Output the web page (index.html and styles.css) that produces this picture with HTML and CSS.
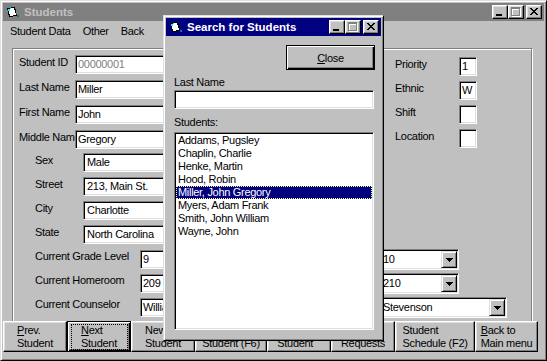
FILE: index.html
```html
<!DOCTYPE html>
<html lang="en">
<head>
<meta charset="utf-8">
<title>Students</title>
<link rel="stylesheet" href="styles.css">
</head>
<body>
<div class="win main">
  <div class="titlebar inactive">
    <svg class="appicon" width="16" height="16" viewBox="0 0 16 16" shape-rendering="crispEdges">
      <polygon points="2,4 10,3 12,12 4,13" fill="#000"/>
      <polygon points="3,5 9,4 11,11 5,12" fill="#fff"/>
      <polygon points="3,5 6,4 4,8" fill="#00ffff"/>
      <rect x="12" y="11" width="2" height="2" fill="#008080"/>
    </svg>
    <span class="title">Students</span>
    <div class="tbtns">
      <span class="tbtn"><svg width="14" height="12" viewBox="0 0 14 12" shape-rendering="crispEdges"><rect x="3" y="8" width="6" height="2"/></svg></span>
      <span class="tbtn"><svg width="14" height="12" viewBox="0 0 14 12" shape-rendering="crispEdges"><g fill="#fff"><rect x="3" y="2" width="9" height="2"/><rect x="3" y="4" width="1" height="7"/><rect x="11" y="4" width="1" height="7"/><rect x="3" y="10" width="9" height="1"/></g><g fill="#808080"><rect x="2" y="1" width="9" height="2"/><rect x="2" y="3" width="1" height="7"/><rect x="10" y="3" width="1" height="7"/><rect x="2" y="9" width="9" height="1"/></g></svg></span>
      <span class="tbtn x"><svg width="14" height="12" viewBox="0 0 14 12" shape-rendering="crispEdges"><path transform="translate(3 2)" d="M0 0h2v1H0z M6 0h2v1H6z M1 1h2v1H1z M5 1h2v1H5z M2 2h4v1H2z M3 3h2v1H3z M2 4h4v1H2z M1 5h2v1H1z M5 5h2v1H5z M0 6h2v1H0z M6 6h2v1H6z"/></svg></span>
    </div>
  </div>
  <div class="menubar">
    <span class="mi">Student Data</span><span class="mi">Other</span><span class="mi">Back</span>
  </div>
  <div class="group">
    <div class="leftcol">
      <div class="fields main-fields">
        <div class="row"><span class="lbl lw56">Student ID</span><span class="tb w150 dis">00000001</span></div>
        <div class="row"><span class="lbl lw56">Last Name</span><span class="tb w150">Miller</span></div>
        <div class="row"><span class="lbl lw56">First Name</span><span class="tb w150">John</span></div>
        <div class="row"><span class="lbl lw56">Middle Name</span><span class="tb w150">Gregory</span></div>
      </div>
      <div class="fields addr-fields">
        <div class="row ind"><span class="lbl lw48">Sex</span><span class="tb w150 p3">Male</span></div>
        <div class="row ind"><span class="lbl lw48">Street</span><span class="tb w150 p3">213, Main St.</span></div>
        <div class="row ind"><span class="lbl lw48">City</span><span class="tb w150 p3">Charlotte</span></div>
        <div class="row ind"><span class="lbl lw48">State</span><span class="tb w150 p3">North Carolina</span></div>
      </div>
    </div>
    <div class="rightcol">
      <div class="row"><span class="lbl lw64">Priority</span><span class="tb sq">1</span></div>
      <div class="row"><span class="lbl lw64">Ethnic</span><span class="tb sq">W</span></div>
      <div class="row"><span class="lbl lw64">Shift</span><span class="tb sq"></span></div>
      <div class="row"><span class="lbl lw64">Location</span><span class="tb sq"></span></div>
    </div>
    <div class="bottomrows">
      <div class="row brow"><span class="lbl lw105">Current Grade Level</span><span class="tb w100">9</span><span class="combo cw80"><span class="cval">10</span><span class="ddbtn"><svg width="7" height="4" viewBox="0 0 7 4" shape-rendering="crispEdges"><path d="M0 0h7v1H0z M1 1h5v1H1z M2 2h3v1H2z M3 3h1v1H3z"/></svg></span></span></div>
      <div class="row brow"><span class="lbl lw105">Current Homeroom</span><span class="tb w100">209</span><span class="combo cw80"><span class="cval">210</span><span class="ddbtn"><svg width="7" height="4" viewBox="0 0 7 4" shape-rendering="crispEdges"><path d="M0 0h7v1H0z M1 1h5v1H1z M2 2h3v1H2z M3 3h1v1H3z"/></svg></span></span></div>
      <div class="row brow"><span class="lbl lw105">Current Counselor</span><span class="tb w100">William Stevenson</span><span class="combo cw128"><span class="cval">Stevenson</span><span class="ddbtn"><svg width="7" height="4" viewBox="0 0 7 4" shape-rendering="crispEdges"><path d="M0 0h7v1H0z M1 1h5v1H1z M2 2h3v1H2z M3 3h1v1H3z"/></svg></span></span></div>
    </div>
  </div>
  <div class="cmdbar">
    <div class="cmd w64"><span class="cap"><u>P</u>rev.<br>Student</span></div>
    <div class="cmd w64 def focus"><span class="cap"><u>N</u>ext<br>Student</span></div>
    <div class="cmd w64"><span class="cap">New<br>Student</span></div>
    <div class="cmd w72"><span class="cap">Find<br>Student (F6)</span></div>
    <div class="cmd w64"><span class="cap">Withdraw<br>Student</span></div>
    <div class="cmd w64"><span class="cap">Course<br>Requests</span></div>
    <div class="cmd w80"><span class="cap">Student<br>Schedule (F2)</span></div>
    <div class="cmd w63"><span class="cap"><u>B</u>ack to<br>Main menu</span></div>
  </div>

  <div class="win dialog">
    <div class="titlebar">
      <svg class="appicon" width="16" height="16" viewBox="0 0 16 16" shape-rendering="crispEdges">
        <polygon points="2,4 10,3 12,12 4,13" fill="#000"/>
        <polygon points="3,5 9,4 11,11 5,12" fill="#fff"/>
        <polygon points="3,5 6,4 4,8" fill="#00ffff"/>
        <rect x="12" y="11" width="2" height="2" fill="#008080"/>
      </svg>
      <span class="title">Search for Students</span>
      <div class="tbtns">
        <span class="tbtn"><svg width="14" height="12" viewBox="0 0 14 12" shape-rendering="crispEdges"><rect x="3" y="8" width="6" height="2"/></svg></span>
        <span class="tbtn"><svg width="14" height="12" viewBox="0 0 14 12" shape-rendering="crispEdges"><g fill="#fff"><rect x="3" y="2" width="9" height="2"/><rect x="3" y="4" width="1" height="7"/><rect x="11" y="4" width="1" height="7"/><rect x="3" y="10" width="9" height="1"/></g><g fill="#808080"><rect x="2" y="1" width="9" height="2"/><rect x="2" y="3" width="1" height="7"/><rect x="10" y="3" width="1" height="7"/><rect x="2" y="9" width="9" height="1"/></g></svg></span>
        <span class="tbtn x"><svg width="14" height="12" viewBox="0 0 14 12" shape-rendering="crispEdges"><path transform="translate(3 2)" d="M0 0h2v1H0z M6 0h2v1H6z M1 1h2v1H1z M5 1h2v1H5z M2 2h4v1H2z M3 3h2v1H3z M2 4h4v1H2z M1 5h2v1H1z M5 5h2v1H5z M0 6h2v1H0z M6 6h2v1H6z"/></svg></span>
      </div>
    </div>
    <div class="dbody">
      <div class="closebtn"><span><u>C</u>lose</span></div>
      <div class="dlbl dlbl1">Last Name</div>
      <div class="tb dinput"></div>
      <div class="dlbl dlbl2">Students:</div>
      <div class="listbox">
        <div class="li">Addams, Pugsley</div>
        <div class="li">Chaplin, Charlie</div>
        <div class="li">Henke, Martin</div>
        <div class="li">Hood, Robin</div>
        <div class="li sel">Miller, John Gregory</div>
        <div class="li">Myers, Adam Frank</div>
        <div class="li">Smith, John William</div>
        <div class="li">Wayne, John</div>
      </div>
    </div>
  </div>
</div>
</body>
</html>
```

FILE: styles.css
```css
* { box-sizing: border-box; margin: 0; padding: 0; }
html, body { background: #c0c0c0; }
body {
  width: 547px; height: 361px; overflow: hidden;
  font-family: "Liberation Sans", Arial, sans-serif;
  font-size: 11px; letter-spacing: -0.3px; color: #000;
}
.win {
  background: #c0c0c0;
  border: 1px solid; border-color: #dfdfdf #000 #000 #dfdfdf;
  box-shadow: inset 1px 1px #fff, inset -1px -1px #808080;
  padding: 2px;
  display: flex; flex-direction: column;
}
.main { position: relative; width: 547px; height: 361px; }

.titlebar {
  flex: none; height: 18px; display: flex; align-items: center;
  padding: 0 2px; background: #000080; color: #fff;
  font-weight: bold; font-size: 11.5px; letter-spacing: 0; white-space: nowrap;
}
.titlebar.inactive { background: #808080; color: #c0c0c0; }
.appicon { display: block; flex: none; }
.title { margin-left: 3px; }
.tbtns { margin-left: auto; display: flex; }
.tbtn {
  width: 16px; height: 14px; background: #c0c0c0;
  border: 1px solid; border-color: #fff #000 #000 #fff;
  box-shadow: inset -1px -1px #808080, inset 1px 1px #dfdfdf;
}
.tbtn svg { display: block; }
.tbtn.x { margin-left: 2px; }

.menubar { flex: none; height: 19px; display: flex; align-items: center; padding-left: 1px; white-space: nowrap; }
.mi { padding: 0 6px; }

.group {
  flex: none; width: 520px; height: 275px; margin: 8px 0 0 9px;
  border: 1px solid #808080;
  box-shadow: inset 1px 1px #fff, 1px 1px #fff;
  padding: 6px 0 0 6px;
  display: grid; grid-template-columns: 376px 1fr; align-content: start;
}
.leftcol { grid-column: 1; grid-row: 1; }
.rightcol { grid-column: 2; grid-row: 1; display: flex; flex-direction: column; gap: 5px; margin-top: 2px; }
.bottomrows { grid-column: 1 / -1; grid-row: 2; display: flex; flex-direction: column; gap: 3px; margin-top: 5px; }

.fields { display: flex; flex-direction: column; }
.main-fields { gap: 6px; }
.addr-fields { gap: 5px; margin-top: 4px; }
.row { display: flex; align-items: flex-start; height: 19px; }
.ind { padding-left: 16px; }
.lbl { flex: none; line-height: 13px; margin-top: 1px; white-space: nowrap; }
.lw56 { width: 56px; }
.lw48 { width: 48px; }
.lw64 { width: 64px; }
.lw105 { width: 105px; }

.tb {
  flex: none; height: 19px; background: #fff;
  border: 1px solid; border-color: #808080 #fff #fff #808080;
  box-shadow: inset 1px 1px #000, inset -1px -1px #dfdfdf;
  padding: 0 2px; line-height: 17px; white-space: nowrap; overflow: hidden;
}
.tb.dis { color: #808080; }
.tb.p3 { padding-left: 3px; }
.w150 { width: 150px; }
.w100 { width: 100px; }
.sq { width: 18px; }

.brow { height: 21px; padding-left: 16px; }
.brow .tb { margin-top: 1px; }
.brow .lbl { margin-top: 1px; }
.combo {
  flex: none; height: 21px; margin-left: 139px;
  display: flex; align-items: center; background: #fff;
  border: 1px solid; border-color: #808080 #fff #fff #808080;
  box-shadow: inset 1px 1px #000, inset -1px -1px #dfdfdf;
  padding: 1px;
}
.cw80 { width: 80px; }
.cw128 { width: 128px; }
.cval { flex: 1; padding-left: 2px; line-height: 17px; white-space: nowrap; overflow: hidden; }
.ddbtn {
  flex: none; width: 16px; height: 17px;
  display: flex; align-items: center; justify-content: center;
  background: #c0c0c0;
  border: 1px solid; border-color: #dfdfdf #000 #000 #dfdfdf;
  box-shadow: inset 1px 1px #fff, inset -1px -1px #808080;
}
.ddbtn svg { display: block; margin-top: 1px; }

.cmdbar { flex: none; display: flex; height: 31px; margin-top: -2px; }
.cmd {
  position: relative; flex: none; height: 31px;
  display: flex; align-items: center; justify-content: center;
  background: #c0c0c0;
  border: 1px solid; border-color: #fff #000 #000 #fff;
  box-shadow: inset -1px -1px #808080, inset 1px 1px #dfdfdf;
}
.cmd.def {
  border-color: #000;
  box-shadow: inset 1px 1px #fff, inset -1px -1px #000, inset -2px -2px #808080;
}
.cmd.focus::after {
  content: ""; position: absolute; left: 3px; top: 2px; right: 2px; bottom: 1px;
  border: 1px dotted #000;
}
.cap { line-height: 13px; white-space: nowrap; text-align: left; }
.w64 { width: 64px; }
.w72 { width: 72px; }
.w80 { width: 80px; }
.w63 { width: 63px; }

.dialog { position: absolute; left: 162px; top: 14px; width: 221px; height: 326px; z-index: 2; }
.dbody { display: flex; flex-direction: column; padding: 0 7px 0 8px; }
.closebtn {
  align-self: flex-end; margin: 9px -1px 0 0; width: 89px; height: 25px;
  display: flex; align-items: center; justify-content: center;
  background: #c0c0c0; border: 1px solid #000;
  box-shadow: inset 1px 1px #fff, inset -1px -1px #000, inset -2px -2px #808080;
}
.dlbl { line-height: 13px; white-space: nowrap; }
.dlbl1 { margin-top: 6px; }
.dinput { margin-top: 1px; width: 200px; }
.dlbl2 { margin-top: 7px; }
.listbox {
  margin-top: 3px; width: 200px; height: 198px; background: #fff;
  border: 1px solid; border-color: #808080 #fff #fff #808080;
  box-shadow: inset 1px 1px #000, inset -1px -1px #dfdfdf;
  padding: 1px;
}
.li { line-height: 13px; padding-left: 2px; white-space: nowrap; }
.li.sel { background: #000080; color: #fff; outline: 1px dotted #ffff80; outline-offset: -1px; }
```
